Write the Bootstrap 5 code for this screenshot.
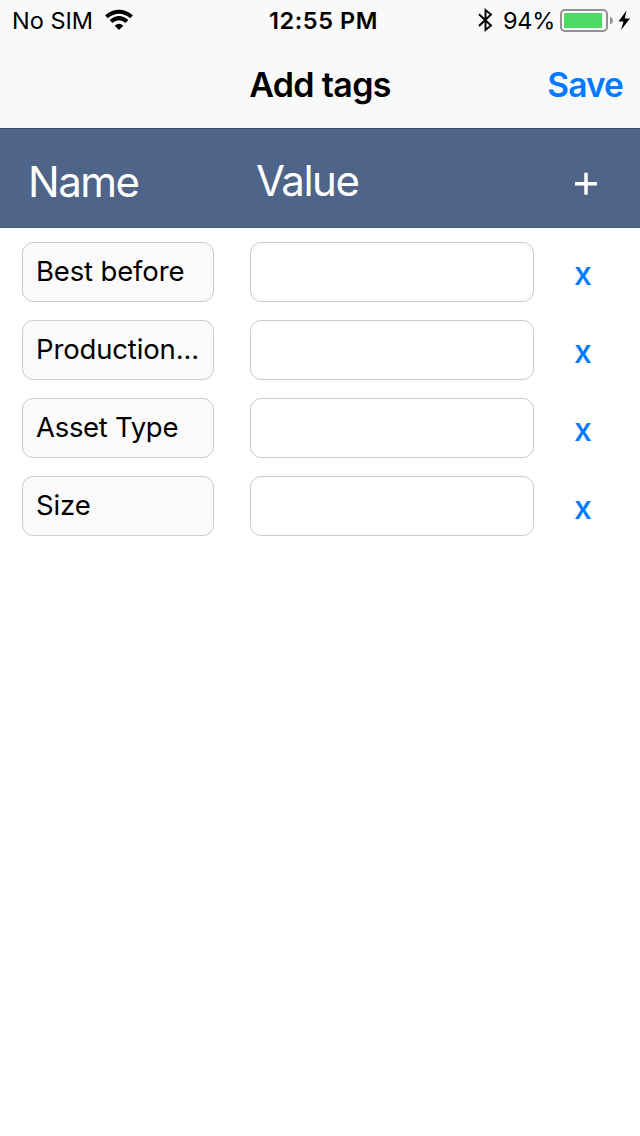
<!DOCTYPE html>
<html lang="en">
<head>
<meta charset="utf-8">
<meta name="viewport" content="width=device-width, initial-scale=1">
<title>Add tags</title>
<link href="https://cdn.jsdelivr.net/npm/bootstrap@5.3.0/dist/css/bootstrap.min.css" rel="stylesheet">
<style>
  body { font-family: Inter, "Liberation Sans", sans-serif; color: #000; background: #fff; overflow: hidden; }
  .top-area { height: 128px; background: linear-gradient(#f9f9f9 55%, #f7f9f9); }
  .status-bar { height: 40px; font-size: 23.5px; line-height: 42px; padding: 0 8px 0 12px; display: grid; grid-template-columns: 1fr auto 1fr; }
  .wifi { margin-left: 8px; }
  .clock { font-weight: 600; font-size: 23.5px; letter-spacing: .6px; padding-left: 3px; }
  .battery-pct { margin-left: 10px; letter-spacing: -.3px; }
  .battery { margin-left: 3px; }
  .title-bar { height: 88px; display: grid; grid-template-columns: 1fr auto 1fr; padding: 1px 17px 0; }
  .title-text { font-size: 34px; font-weight: 600; line-height: 88px; letter-spacing: -.65px; }
  .save-btn { color: #007aff; font-size: 33.5px; font-weight: 600; letter-spacing: -.9px; line-height: 88px; }
  .columns-bar { height: 100px; background: #4e6488; border-top: 1px solid #3d4a63; border-bottom: 1px solid #485c7e; color: #fff; font-size: 42px; line-height: 105px; padding-left: 28px; }
  .col-name { width: 228px; letter-spacing: -1.5px; }
  .col-value { width: 315px; letter-spacing: -1.5px; line-height: 103px; }
  .tag-list { padding: 14px 0 0 22px; gap: 18px; }
  .tag-row { height: 60px; }
  .tag-field { height: 60px; border: 1px solid #ccc; border-radius: 11px; padding: 0 13px; font-size: 27.5px; line-height: 57px; letter-spacing: -.15px; color: #000; }
  .tag-name { width: 192px; background: #fafafa; margin-right: 36px; }
  .tag-long { letter-spacing: -.15px; padding-right: 8px; }
  .tag-type { letter-spacing: -.3px; }
  .tag-value { width: 284px; background: #fff; margin-right: 40px; }
  .remove-btn { color: #007aff; font-size: 32px; line-height: 63px; font-weight: 500; }
</style>
</head>
<body>
<header class="top-area">
  <div class="status-bar">
    <div class="d-flex align-items-start">
      <span class="carrier text-nowrap">No SIM</span>
      <svg class="wifi" width="36" height="40" viewBox="0 0 36 40" aria-hidden="true">
        <g fill="none" stroke="#000" stroke-width="4">
          <path d="M5.4 16.7Q18 6.7 30.6 16.7"/>
          <path d="M10 21.6Q18 14.6 26 21.6"/>
        </g>
        <path d="M13.7 25.7Q18 21.7 22.3 25.7L18 30Z"/>
      </svg>
    </div>
    <div class="clock text-nowrap">12:55 PM</div>
    <div class="d-flex align-items-start justify-content-end">
      <svg width="15" height="40" viewBox="0 0 15 40" fill="none" stroke="#000" stroke-width="1.9" aria-hidden="true"><path d="M1 14.2L13 25.5L7.5 30V10L13 14.5L1 26"/></svg>
      <span class="battery-pct">94%</span>
      <svg class="battery" width="74" height="40" viewBox="0 0 74 40" aria-hidden="true">
        <rect x="3" y="10" width="46" height="21" rx="4" fill="none" stroke="#929292" stroke-width="2"/>
        <rect x="6" y="13" width="38" height="15" fill="#4cd964"/>
        <path d="M52 16.5Q55 18 55 20.5T52 24.5Z" fill="#929292"/>
        <path d="M68.5 10.5L60.5 21.5H65.5L63 30L72 18.5H66.8Z"/>
      </svg>
    </div>
  </div>
  <nav class="title-bar">
    <span></span>
    <h1 class="title-text m-0">Add tags</h1>
    <button type="button" class="save-btn btn p-0 border-0 text-end">Save</button>
  </nav>
</header>
<main>
  <div class="columns-bar d-flex">
    <div class="col-name">Name</div>
    <div class="col-value">Value</div>
    <button type="button" class="btn p-0 border-0 d-flex align-items-center" aria-label="Add tag">
      <svg width="28" height="98" viewBox="0 0 28 98" aria-hidden="true"><path d="M4 54.8H26M15 43.8V65.8" stroke="#fff" stroke-width="3.5"/></svg>
    </button>
  </div>
  <div class="tag-list d-flex flex-column">
    <div class="tag-row d-flex">
      <div class="tag-field tag-name text-truncate">Best before</div>
      <input class="tag-field tag-value" type="text" aria-label="Best before">
      <button type="button" class="remove-btn btn p-0 border-0">x</button>
    </div>
    <div class="tag-row d-flex">
      <div class="tag-field tag-name tag-long text-truncate">Production...</div>
      <input class="tag-field tag-value" type="text" aria-label="Production">
      <button type="button" class="remove-btn btn p-0 border-0">x</button>
    </div>
    <div class="tag-row d-flex">
      <div class="tag-field tag-name tag-type text-truncate">Asset Type</div>
      <input class="tag-field tag-value" type="text" aria-label="Asset Type">
      <button type="button" class="remove-btn btn p-0 border-0">x</button>
    </div>
    <div class="tag-row d-flex">
      <div class="tag-field tag-name text-truncate">Size</div>
      <input class="tag-field tag-value" type="text" aria-label="Size">
      <button type="button" class="remove-btn btn p-0 border-0">x</button>
    </div>
  </div>
</main>
<script src="https://cdn.jsdelivr.net/npm/bootstrap@5.3.0/dist/js/bootstrap.bundle.min.js"></script>
</body>
</html>
